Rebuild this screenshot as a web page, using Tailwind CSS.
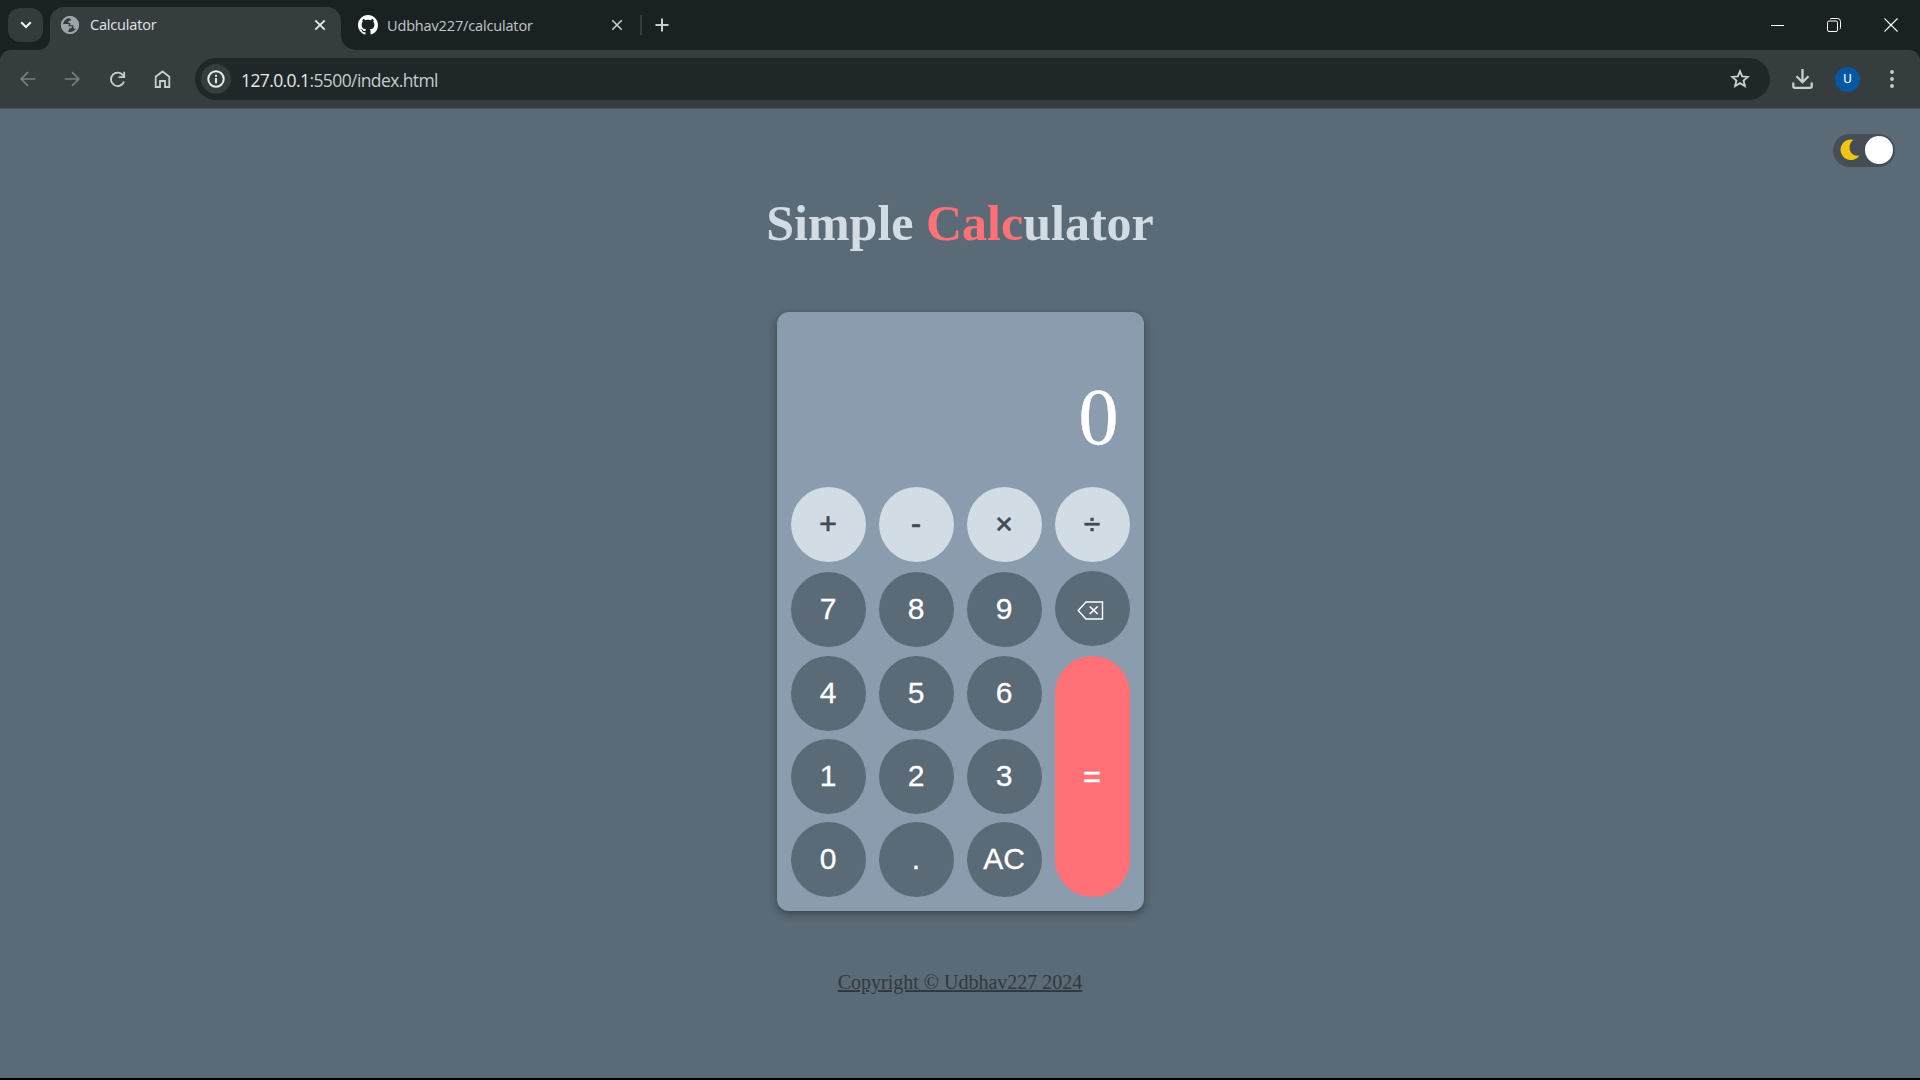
<!DOCTYPE html>
<html lang="en">
<head>
<meta charset="utf-8">
<title>Calculator</title>
<script src="https://cdn.jsdelivr.net/npm/@tailwindcss/browser@4"></script>
</head>
<body class="w-[1920px] h-[1080px] overflow-hidden bg-black flex flex-col font-['Open_Sans','Noto_Sans',sans-serif]">

<!-- Tab strip -->
<header class="h-[50px] shrink-0 bg-[#1a2123] flex items-start text-[#e3e6e8]">
  <div class="ml-2 mt-2 w-[35px] h-[34px] rounded-xl bg-[#343b3d] flex items-center justify-center">
    <svg width="12" height="8" viewBox="0 0 12 8" fill="none" stroke="#f1f3f4" stroke-width="2"><path d="M1.2 1.3 6 6 10.8 1.3"/></svg>
  </div>
  <svg class="w-[12px] h-[12px] -ml-[5px] mt-[38px]" viewBox="0 0 12 12"><path d="M12 0V12H0A12 12 0 0 0 12 0Z" fill="#363d3f"/></svg>
  <div class="mt-[7px] w-[291px] h-[43px] rounded-t-[14px] bg-[#363d3f] flex items-center pl-[11px] pr-[15px] pb-[8px]">
    <svg width="18" height="18" viewBox="2 2 20 20" fill="#9ea4a7"><path d="M12 2C6.48 2 2 6.48 2 12s4.48 10 10 10 10-4.480 10-10S17.520 2 12 2z"/><path fill="#363d3f" d="M10.500 4.200 C7 5 4.500 7.500 4 11 h6.500 v2.300 h3.300 v2.200 h-2.800 v2.500 l-1.500 .5 v1.600 C13 20.800 17 19.500 19 16.200 h-1.500 c-1-.1-1.600-.8-1.700-1.800 v-2 h-3.400 V9.800 h-2 V7.300 h2.600 V5.600 z"/><path d="M12 2a10 10 0 1 0 0 20 10 10 0 0 0 0-20zm0 2a8 8 0 1 1 0 16 8 8 0 0 1 0-16z"/></svg>
    <span class="ml-[11px] pt-px text-[14.500px] leading-5 tracking-[-0.180px] grow">Calculator</span>
    <svg width="12" height="12" viewBox="0 0 12 12" stroke="#eceff0" stroke-width="1.700"><path d="M1.300 1.300 10.700 10.700M10.700 1.300 1.300 10.700"/></svg>
  </div>
  <svg class="w-[15px] h-[15px] mt-[35px]" viewBox="0 0 15 15"><path d="M0 0V15H15A15 15 0 0 1 0 0Z" fill="#363d3f"/></svg>
  <div class="h-[50px] flex items-center text-[#c2c7c9]">
    <svg class="ml-[2px]" width="20" height="20" viewBox="0 0 16 16" fill="#fff"><path d="M8 0C3.580 0 0 3.580 0 8c0 3.540 2.290 6.530 5.470 7.590.4.070.55-.17.55-.38 0-.19-.010-.820-.010-1.490-2.010.370-2.530-.490-2.690-.940-.090-.230-.480-.940-.820-1.130-.280-.150-.680-.520-.010-.530.630-.010 1.080.580 1.230.820.720 1.210 1.870.870 2.330.660.070-.520.280-.870.510-1.070-1.780-.200-3.640-.890-3.640-3.950 0-.870.310-1.590.820-2.150-.080-.200-.360-1.020.080-2.120 0 0 .670-.210 2.200.820.640-.180 1.320-.270 2-.270s1.360.090 2 .270c1.530-1.040 2.200-.820 2.200-.820.440 1.100.160 1.920.080 2.120.510.560.820 1.270.820 2.150 0 3.070-1.870 3.750-3.650 3.950.290.250.540.730.540 1.480 0 1.070-.010 1.930-.010 2.200 0 .210.150.460.550.380A8.010 8.010 0 0 0 16 8c0-4.420-3.580-8-8-8z"/></svg>
    <span class="ml-[9px] pt-px w-[224px] text-[14.500px] leading-5 tracking-[-0.150px]">Udbhav227/calculator</span>
    <svg width="12" height="12" viewBox="0 0 12 12" stroke="#c9cdcf" stroke-width="1.600"><path d="M1.300 1.300 10.700 10.700M10.700 1.300 1.300 10.700"/></svg>
    <div class="ml-[17px] w-[2px] h-5 bg-[#363d3f]"></div>
    <svg class="ml-[13px]" width="14" height="14" viewBox="0 0 14 14" stroke="#c9cdcf" stroke-width="2"><path d="M7 .5V13.500M.5 7H13.500"/></svg>
  </div>
  <div class="ml-auto mr-[22px] h-[50px] flex items-center">
    <div class="w-[13px] h-px bg-white"></div>
    <svg class="ml-[43px]" width="14" height="14" viewBox="0 0 14 14" fill="none" stroke="#fff" stroke-width="1"><rect x=".5" y="3" width="10" height="10.500" rx="1.500"/><path d="M3 1 C3.500 .6 4 .5 5 .5H10.500A3 3 0 0 1 13.500 3.500V9.500C13.500 10.300 13.300 10.800 12.800 11.200"/></svg>
    <svg class="ml-[43px]" width="14" height="14" viewBox="0 0 14 14" stroke="#fff" stroke-width="1.100"><path d="M.5 .5 13.500 13.500M13.500 .5 .5 13.500"/></svg>
  </div>
</header>

<!-- Toolbar -->
<div class="h-[59px] shrink-0 bg-[#1a2123]">
  <div class="h-[59px] bg-[#363d3f] rounded-t-[11px] border-b border-[#4a5155] flex items-center">
    <svg class="ml-[20px]" width="16" height="16" viewBox="0 0 16 16" fill="none" stroke="#777d80" stroke-width="1.700"><path d="M15.300 8H1.700M8 1.200 1.200 8 8 14.800"/></svg>
    <svg class="ml-[28px]" width="16" height="16" viewBox="0 0 16 16" fill="none" stroke="#777d80" stroke-width="1.700"><path d="M.7 8H14.300M8 1.200 14.800 8 8 14.800"/></svg>
    <svg class="ml-[29px]" width="17" height="17" viewBox="0 0 17 17" fill="none" stroke="#c9cdcf" stroke-width="1.800"><path d="M14.300 4.800A6.700 6.700 0 1 0 15 10.500M15.200 .8V6.200H9.600"/></svg>
    <svg class="ml-[28px]" width="17" height="18" viewBox="0 0 17 18" fill="none" stroke="#c9cdcf" stroke-width="1.800"><path d="M1.700 6.800 8.500 1.500 15.300 6.800V17H11V11H6V17H1.700Z"/></svg>
    <div class="ml-[24px] w-[1575px] h-[42px] rounded-full bg-[#1f2729] flex items-center pl-[6px] pr-[20px]">
      <div class="w-[30px] h-[30px] rounded-full bg-[#363d3f] flex items-center justify-center">
        <svg width="18" height="18" viewBox="0 0 18 18" fill="none" stroke="#e6e9ea" stroke-width="2"><circle cx="9" cy="9" r="7.700"/><path d="M9 8V13.200M9 4.700V6.700"/></svg>
      </div>
      <div class="ml-[10px] pt-px grow text-[17.500px] leading-6 tracking-[-0.600px] text-[#c8cccd]"><span class="text-[#e6e9ea]">127.0.0.1</span>:5500/index.html</div>
      <svg width="20" height="20" viewBox="0 0 20 20" fill="none" stroke="#c9cdcf" stroke-width="1.900"><path d="M10 2.300 12.200 7.400 17.900 7.900 13.600 11.600 14.900 17.100 10 14.200 5.100 17.100 6.400 11.600 2.100 7.900 7.800 7.400Z"/></svg>
    </div>
    <svg class="ml-[22px]" width="21" height="20" viewBox="0 0 21 20" fill="none" stroke="#c9cdcf" stroke-width="2.300"><path d="M10.500 0V13M4.500 7.200 10.500 13.200 16.500 7.200M1.300 13.500V17.200Q1.300 18.800 2.900 18.800H18.100Q19.700 18.800 19.700 17.200V13.500"/></svg>
    <div class="ml-[22px] w-[25px] h-[25px] rounded-full bg-[#0558a1] flex items-center justify-center text-white text-[13px] font-['Roboto',sans-serif]">U</div>
    <svg class="ml-[30px]" width="4" height="18" viewBox="0 0 4 18" fill="#c9cdcf"><circle cx="2" cy="2" r="1.900"/><circle cx="2" cy="9" r="1.900"/><circle cx="2" cy="16" r="1.900"/></svg>
  </div>
</div>

<!-- Page -->
<main class="h-[969px] shrink-0 bg-[#5a6a76] flex flex-col items-center">
  <div class="w-full h-[83px] flex justify-end pt-[25px] pr-[25px]">
    <div class="w-[62px] h-[33px] rounded-full bg-[#454e55] flex items-center justify-between pl-[7px] pr-[2px] pb-px">
      <svg width="20" height="22" viewBox="0 0 20 22" fill="#f1c40f"><path d="M13.500 .8A10.300 10.300 0 1 0 19.500 16.400C13.500 17.600 9.600 14 9.600 8.800 9.600 5.500 10.800 2.600 13.500 .8Z"/></svg>
      <div class="w-[28px] h-[28px] rounded-full bg-white"></div>
    </div>
  </div>
  <h1 class="h-[120px] pt-[2px] font-bold text-[50px] leading-[58px] text-[#d1dce4] font-['Liberation_Serif',serif]">Simple <span class="text-[#ff7176]">Calc</span>ulator</h1>

  <section class="w-[367px] h-[599px] shrink-0 rounded-[12px] bg-[#8a9cad] shadow-[0_3px_8px_rgba(0,0,0,0.35)] px-[14px] flex flex-col text-[30px] text-white font-['Liberation_Sans',sans-serif]">
    <div class="h-[175px] flex justify-end pt-[59px] pr-[11px] text-[80px] leading-[92px] font-['Liberation_Serif',serif] [-webkit-text-stroke:0.4px_white]">0</div>
    <div class="grid grid-cols-[repeat(4,75px)] gap-x-[13px] text-[#424b52] [-webkit-text-stroke:0.7px_#424b52]">
      <button class="h-[75px] pb-[3px] rounded-full bg-[#d1dce4]">+</button>
      <button class="h-[75px] pb-[2px] rounded-full bg-[#d1dce4]">-</button>
      <button class="h-[75px] pb-[3px] rounded-full bg-[#d1dce4]">×</button>
      <button class="h-[75px] pb-[3px] rounded-full bg-[#d1dce4]">÷</button>
    </div>
    <div class="mt-[9px] flex gap-[13px] [-webkit-text-stroke:0.3px_white]">
      <div class="pt-px grid grid-cols-[repeat(3,75px)] grid-rows-[84px_83px_83px_75px] gap-x-[13px]">
        <button class="h-[75px] pb-[2px] rounded-full bg-[#5a6a76]">7</button>
        <button class="h-[75px] pb-[2px] rounded-full bg-[#5a6a76]">8</button>
        <button class="h-[75px] pb-[2px] rounded-full bg-[#5a6a76]">9</button>
        <button class="h-[75px] pb-[2px] rounded-full bg-[#5a6a76]">4</button>
        <button class="h-[75px] pb-[2px] rounded-full bg-[#5a6a76]">5</button>
        <button class="h-[75px] pb-[2px] rounded-full bg-[#5a6a76]">6</button>
        <button class="h-[75px] pb-[2px] rounded-full bg-[#5a6a76]">1</button>
        <button class="h-[75px] pb-[2px] rounded-full bg-[#5a6a76]">2</button>
        <button class="h-[75px] pb-[2px] rounded-full bg-[#5a6a76]">3</button>
        <button class="h-[75px] pb-[2px] rounded-full bg-[#5a6a76]">0</button>
        <button class="h-[75px] pb-[2px] rounded-full bg-[#5a6a76]">.</button>
        <button class="h-[75px] pb-[2px] rounded-full bg-[#5a6a76]">AC</button>
      </div>
      <div class="w-[75px] flex flex-col gap-[10px]">
        <button class="h-[75px] rounded-full bg-[#5a6a76] flex items-center justify-center pr-[4px] pt-[3px]" aria-label="Delete">
          <svg width="27" height="19" viewBox="0 0 27 19" fill="none" stroke="#fff"><path d="M9 1H25.500V18H9L1.200 9.500Z" stroke-width="1.400"/><path d="M12.700 5.500 20.700 13M20.700 5.500 12.700 13" stroke-width="1.700"/></svg>
        </button>
        <button class="h-[241px] rounded-full bg-[#ff7176] [-webkit-text-stroke:0.7px_white]">=</button>
      </div>
    </div>
  </section>

  <a class="mt-[59px] text-[20px] leading-[24px] underline text-[#2f393f] font-['Liberation_Serif',serif]">Copyright © Udbhav227 2024</a>
</main>
</body>
</html>
